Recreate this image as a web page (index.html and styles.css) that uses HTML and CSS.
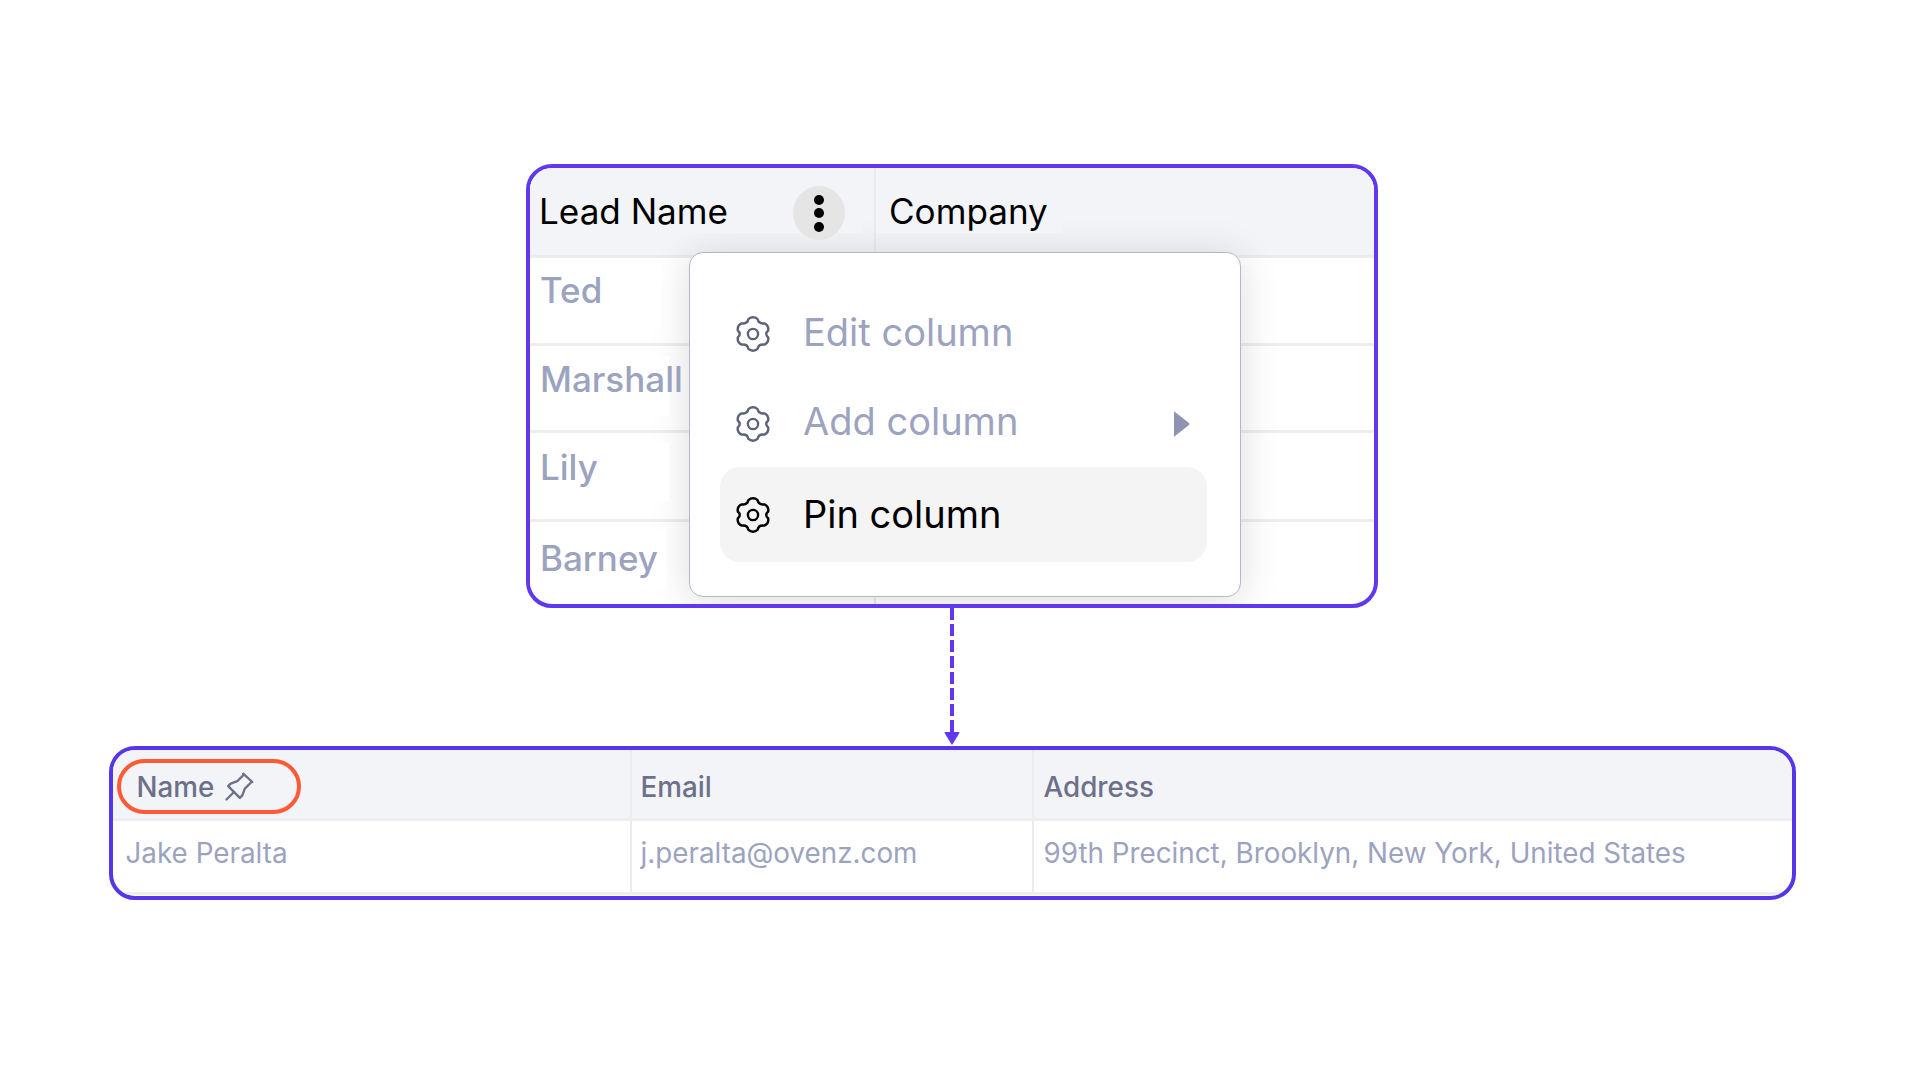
FILE: index.html
```html
<!DOCTYPE html>
<html lang="en">
<head>
<meta charset="utf-8">
<title>Pin column</title>
<link rel="stylesheet" href="styles.css">
</head>
<body>
<svg class="defs" width="0" height="0" aria-hidden="true">
  <symbol id="gear" viewBox="0 0 24 24">
    <path d="M8.96 2.05A4.5 4.5 0 0 1 15.04 2.05Q15.75 5.5 19.61 4.91A4.5 4.5 0 0 1 22.13 9.66Q19.5 12 22.13 14.34A4.5 4.5 0 0 1 19.61 19.09Q15.75 18.5 15.04 21.95A4.5 4.5 0 0 1 8.96 21.95Q8.25 18.5 4.39 19.09A4.5 4.5 0 0 1 1.87 14.34Q4.5 12 1.87 9.66A4.5 4.5 0 0 1 4.39 4.91Q8.25 5.5 8.96 2.05Z"/>
    <circle cx="12" cy="12" r="3.4"/>
  </symbol>
</svg>
<main class="canvas">
  <section class="lead-table">
    <div class="lead-head">
      <div class="lead-col lead-col-name">
        <span class="patch patch-lead">Lead Name</span>
        <span class="kebab"><i></i><i></i><i></i></span>
      </div>
      <div class="lead-col lead-col-company">
        <span class="patch patch-company">Company</span>
      </div>
    </div>
    <div class="lead-row row-ted"><div class="lead-cell"><span class="name patch-ted">Ted</span></div><div></div></div>
    <div class="lead-row row-marshall"><div class="lead-cell"><span class="name patch-marshall">Marshall</span></div><div></div></div>
    <div class="lead-row row-lily"><div class="lead-cell"><span class="name patch-lily">Lily</span></div><div></div></div>
    <div class="lead-row row-barney"><div class="lead-cell"><span class="name patch-barney">Barney</span></div><div></div></div>
    <div class="menu">
      <div class="menu-item">
        <svg class="gear" width="36" height="36"><use href="#gear"/></svg>
        <span>Edit column</span>
      </div>
      <div class="menu-item menu-item-add">
        <svg class="gear" width="36" height="36"><use href="#gear"/></svg>
        <span>Add column</span>
        <svg class="caret" width="16" height="26" viewBox="0 0 16 26"><path d="M0 1Q0 0 1 1L15 12Q16 13 15 14L1 25Q0 26 0 25Z"/></svg>
      </div>
      <div class="menu-item menu-item-active">
        <svg class="gear" width="36" height="36"><use href="#gear"/></svg>
        <span>Pin column</span>
      </div>
    </div>
  </section>

  <div class="connector">
    <div class="dash"></div>
    <svg class="arrow" width="16" height="13" viewBox="0 0 16 13"><path d="M1 0H15Q16 0 15.4 1L8.6 12.2Q8 13 7.4 12.2L.6 1Q0 0 1 0Z"/></svg>
  </div>

  <section class="people-table">
    <div class="people-row people-head">
      <div class="people-cell cell-name">
        <span class="pinned">Name
          <svg class="pin" width="40" height="40" viewBox="0 0 24 24"><path d="M15 4.5l-4 4l-4 1.5l-1.5 1.5l7 7l1.5 -1.5l1.5 -4l4 -4"/><path d="M9 15l-4.5 4.5"/><path d="M14.5 4l5.5 5"/></svg>
        </span>
      </div>
      <div class="people-cell cell-email">Email</div>
      <div class="people-cell cell-address">Address</div>
    </div>
    <div class="people-row people-body">
      <div class="people-cell cell-name-body">Jake Peralta</div>
      <div class="people-cell cell-email">j.peralta@ovenz.com</div>
      <div class="people-cell cell-address">99th Precinct, Brooklyn, New York, United States</div>
    </div>
  </section>
</main>
</body>
</html>
```
FILE: styles.css
```css
* { box-sizing: border-box; }
html, body { margin: 0; height: 100%; background: #fff; }
body { font-family: "Inter", "Liberation Sans", sans-serif; overflow: hidden; }
.defs { position: absolute; }

.canvas { height: 1080px; padding-top: 164px; padding-right: 16px; display: flex; flex-direction: column; align-items: center; }

/* Top table */
.lead-table { position: relative; width: 852px; height: 444px; border: 4px solid #5f38f0; border-radius: 26px; overflow: hidden; background: #fff; font-size: 35px; flex: none; }
.lead-head { display: grid; grid-template-columns: 346px 1fr; height: 90px; background: #f3f4f8; border-bottom: 3px solid #ececee; }
.lead-col { display: flex; align-items: flex-start; }
.lead-col-name { border-right: 2px solid #ececef; padding-top: 11px; }
.patch { position: relative; z-index: 2; background: #f3f4f8; color: #000; font-weight: 400; font-size: 35.1px; height: 54px; padding-top: 9px; line-height: 46px; display: block; }
.patch-lead { width: 332px; padding-left: 9px; flex: none; }
.patch-company { width: 186px; padding-left: 13px; margin-top: 11px; }
.kebab { position: absolute; z-index: 3; left: 263px; top: 18px; width: 52px; height: 54px; border-radius: 50%; background: #e5e5e5; display: flex; flex-direction: column; align-items: center; justify-content: center; gap: 3.5px; }
.kebab i { display: block; width: 10px; height: 10px; border-radius: 50%; background: #000; }

.lead-row { display: grid; grid-template-columns: 346px 1fr; border-bottom: 3px solid #eeeeef; }
.lead-cell { border-right: 2px solid #ececef; }
.row-ted { height: 88px; padding-top: 9px; }
.row-marshall { height: 87px; padding-top: 10px; }
.row-lily { height: 89px; padding-top: 9px; }
.row-barney { height: 85px; padding-top: 7px; border-bottom: 0; }
.name { position: relative; z-index: 2; display: block; height: 60px; line-height: 46px; padding-left: 10px; background: #fff; color: #9ca3bf; font-weight: 500; white-space: nowrap; }
.patch-ted { width: 132px; }
.patch-marshall { width: 139px; }
.patch-lily { width: 139px; padding-top: 2px; }
.patch-barney { width: 137px; padding-top: 6px; }

/* Menu */
.menu { position: absolute; z-index: 1; left: 159px; top: 84px; width: 552px; height: 345px; background: #fff; border: 1px solid #b3b8d0; border-radius: 14px; box-shadow: 0 4px 40px rgba(0, 0, 0, .14); padding: 36px 33px 0 30px; font-size: 38px; color: #9ca3bf; }
.menu-item { display: flex; align-items: center; gap: 32px; height: 90px; padding-left: 15px; }
.menu-item span { flex: 1; padding-bottom: 5px; }
.menu-item-add { height: 89px; }
.gear { fill: none; stroke: #5e6478; stroke-width: 1.6; stroke-linejoin: round; flex: none; }
.caret { fill: #8f94b2; margin-right: 17px; flex: none; }
.menu-item-active { height: 95px; margin-top: -1px; background: #f4f4f4; border-radius: 20px; color: #000; }
.menu-item-active span { padding-bottom: 1px; }
.menu-item-active .gear { stroke: #000; }

/* Connector */
.connector { height: 138px; display: flex; flex-direction: column; align-items: center; flex: none; }
.dash { width: 4px; height: 124px; background: repeating-linear-gradient(to bottom, #5f38f0 0 12px, transparent 12px 16px); flex: none; }
.arrow { fill: #5f38f0; display: block; flex: none; }

/* Bottom table */
.people-table { width: 1687px; height: 154px; border: 4px solid #5636e8; border-radius: 26px; overflow: hidden; background: #fff; font-size: 27.8px; flex: none; }
.people-row { display: grid; grid-template-columns: 519px 402px 1fr; }
.people-head { height: 71px; background: #f3f4f8; border-bottom: 3px solid #eeeeef; color: #6c7189; font-weight: 500; }
.people-body { height: 74px; border-bottom: 3px solid #eeeeef; color: #9ca3bf; }
.people-cell { display: flex; align-items: center; white-space: nowrap; }
.people-head .people-cell { padding-top: 5px; }
.cell-name-body { padding-left: 13px; border-right: 2px solid #ececef; }
.cell-name { border-right: 2px solid #ececef; padding-left: 4px; }
.cell-email { padding-left: 9px; border-right: 2px solid #ececef; }
.cell-address { padding-left: 10px; }
.people-body .people-cell { padding-bottom: 8px; }
.pinned { display: flex; align-items: center; gap: 0; width: 184px; height: 55px; border: 4px solid #ff5a36; border-radius: 28px; padding-left: 16px; }
.pin { fill: none; stroke: #6c7189; stroke-width: 1.4; stroke-linecap: round; stroke-linejoin: round; margin-left: 5px; flex: none; }
```
